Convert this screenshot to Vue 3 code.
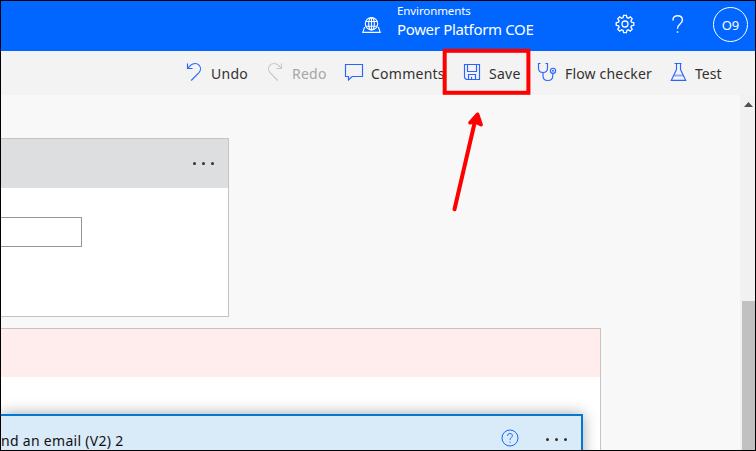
<script setup>
const actions = [
  { id: 'undo', label: 'Undo' },
  { id: 'redo', label: 'Redo' },
  { id: 'comments', label: 'Comments' },
  { id: 'save', label: 'Save' },
  { id: 'checker', label: 'Flow checker' },
  { id: 'test', label: 'Test' },
]
</script>

<template>
  <div class="window">
    <header class="topbar">
      <svg class="globe" width="20" height="20" viewBox="0 0 20 20">
        <circle cx="10.5" cy="7.8" r="6.2" />
        <ellipse cx="10.5" cy="7.8" rx="2.8" ry="6.2" />
        <path d="M4.8 5.5h11.4M4.8 10.2h11.4M10.5 2v12M4.2 11.5H3.4L1.8 16.4h17.4l-1.6-4.9h-.8" />
      </svg>
      <div class="environment">
        <span class="env-caption">Environments</span>
        <span class="env-name">Power Platform COE</span>
      </div>
      <svg class="gear" width="20" height="20" viewBox="0 0 20 20">
        <path d="M8.6 1.3h2.8l.5 2.3 1.4.6 2-1.3 1.9 1.9-1.3 2 .6 1.4 2.3.5v2.6l-2.3.5-.6 1.4 1.3 2-1.9 1.9-2-1.3-1.4.6-.5 2.3H8.6l-.5-2.3-1.4-.6-2 1.3-1.9-1.9 1.3-2-.6-1.4-2.3-.5V8.7l2.3-.5.6-1.4-1.3-2 1.9-1.9 2 1.3 1.4-.6z" />
        <circle cx="10" cy="10" r="3" />
      </svg>
      <svg class="help" width="14" height="20" viewBox="0 0 14 20">
        <path d="M2 6.5V5.9C2 3.3 4 1.7 6.6 1.7c2.9 0 4.8 1.6 4.8 4.2 0 4.4-4.9 4-4.9 8.8" />
        <path d="M5.7 18h1.6" />
      </svg>
      <div class="avatar">O9</div>
    </header>

    <nav class="toolbar">
      <div v-for="a in actions" :key="a.id" class="action" :class="a.id">
        <svg class="icon" width="20" height="20" viewBox="0 0 20 20">
          <path v-if="a.id === 'undo'" d="M2.5 1.5v5h5M2.8 6.2L5.8 3.2C8.3.9 12 1 14 3.1s1.9 5.3 0 7.5L6.2 18.5" />
          <path v-else-if="a.id === 'redo'" d="M15.5 1.5v5h-5M15.2 6.2L12.2 3.2C9.7.9 6 1 4 3.1s-1.9 5.3 0 7.5l7.8 7.9" />
          <path v-else-if="a.id === 'comments'" d="M1.5 2.5h17v12H8.2L4.5 18v-3.5h-3z" />
          <g v-else-if="a.id === 'save'">
            <path d="M1.5 2.5h15v15H3.3l-1.8-1.8zM4.5 2.5v7h9v-7M5.5 17.5v-5h7v5M8.5 17.5v-2.7" />
          </g>
          <g v-else-if="a.id === 'checker'">
            <path d="M3.5 1.5h-2v4.8c0 2.6 1.9 4.2 4.5 4.2s4.5-1.6 4.5-4.2V1.5h-2M6 10.5v3.2c0 3 1.8 4.8 4.7 4.8s5.1-1.8 5.1-4.8v-2.5" />
            <circle cx="16" cy="8.8" r="2.6" />
            <circle cx="16" cy="8.8" r=".4" />
          </g>
          <g v-else>
            <path class="level" d="M5 13.5h9" />
            <path d="M5.5 1.5h7M7.5 1.5v6L2.3 18.3h14.4L11.5 7.5v-6" />
          </g>
        </svg>
        <span class="label">{{ a.label }}</span>
      </div>
    </nav>

    <main class="workspace">
      <div class="canvas">
        <section class="card trigger">
          <div class="card-head">
            <span class="dots"><i /><i /><i /></span>
          </div>
          <div class="card-body"><div class="field" /></div>
        </section>
        <section class="card scope">
          <div class="scope-head" />
          <div class="scope-body">
            <div class="mail">
              <span class="mail-title">nd an email (V2) 2</span>
              <svg class="info" width="18" height="18" viewBox="0 0 18 18">
                <circle cx="9" cy="9" r="8" />
                <path d="M6.6 7V6.7c0-1.3 1-2.2 2.4-2.2s2.4.9 2.4 2.1c0 2-2.4 1.9-2.4 4.3M9 12.7v1.1" />
              </svg>
              <span class="dots"><i /><i /><i /></span>
            </div>
          </div>
        </section>
      </div>
      <aside class="scrollbar">
        <svg class="up" width="9" height="5" viewBox="0 0 9 5"><path d="M0 5L4.5 0 9 5z" /></svg>
        <div class="thumb" />
      </aside>
    </main>

    <svg class="markup" width="756" height="451" viewBox="0 0 756 451">
      <rect x="444.7" y="50.8" width="83.7" height="42" />
      <path d="M454.5 209.3L475.5 119" />
      <path class="tip" d="M477.6 114.3L470 122.8l5.5-1 5.6 2.9z" />
    </svg>
  </div>
</template>

<style>
body {
  margin: 0;
}
</style>

<style scoped>
.window {
  position: relative;
  box-sizing: border-box;
  width: 756px;
  height: 451px;
  border: 1px solid #000;
  overflow: hidden;
  display: flex;
  flex-direction: column;
  background: #f8f8f8;
  font-family: "Noto Sans", "Open Sans", sans-serif;
  color: #323130;
}
svg {
  display: block;
  flex: none;
  fill: none;
}
.topbar {
  flex: none;
  height: 50px;
  display: flex;
  background: #0066ff;
  color: #fff;
}
.topbar svg {
  stroke: #fff;
  stroke-width: 1.1;
}
.globe {
  margin: 15px 0 0 360px;
}
.environment {
  margin-left: 16px;
  width: 218px;
  display: flex;
  flex-direction: column;
  white-space: nowrap;
}
.env-caption {
  font-size: 11.5px;
  line-height: 16px;
  margin-top: 2px;
  letter-spacing: -0.1px;
}
.env-name {
  font-size: 15px;
  line-height: 20px;
  letter-spacing: -0.34px;
}
.topbar .gear {
  margin-top: 13px;
  stroke-width: 1.3;
}
.topbar .help {
  margin: 13px 0 0 36px;
  stroke-width: 1.4;
}
.avatar {
  box-sizing: border-box;
  width: 35px;
  height: 35px;
  margin: 6px 0 0 28px;
  border: 1px solid #fff;
  border-radius: 50%;
  text-align: center;
  font-size: 13px;
  line-height: 34px;
}
.toolbar {
  flex: none;
  height: 44px;
  display: flex;
  padding-left: 184px;
  background: #f3f3f3;
}
.action {
  flex: none;
  display: flex;
  width: 81px;
  white-space: nowrap;
}
.icon {
  margin-top: 11px;
  stroke: #2b64ff;
  stroke-width: 1.15;
}
.label {
  margin: 13px 0 0 6px;
  font-size: 14px;
  line-height: 20px;
  letter-spacing: 0.25px;
}
.redo {
  width: 78px;
  color: #a6a6a6;
}
.redo .icon {
  stroke: #c8c8c8;
}
.comments {
  width: 119px;
}
.comments .label {
  margin-left: 7px;
}
.save {
  width: 74px;
}
.checker {
  width: 132px;
}
.checker .label {
  margin-left: 8px;
  letter-spacing: 0.18px;
}
.test .label {
  letter-spacing: 0;
}
.level {
  stroke: #8badff;
  stroke-width: 2;
}
.workspace {
  flex: 1;
  min-height: 0;
  display: flex;
}
.canvas {
  width: 739px;
  padding-top: 43px;
  box-sizing: border-box;
  overflow: hidden;
}
.card {
  box-sizing: border-box;
  border: 1px solid #c6c4c3;
  border-left: 0;
  background: #fff;
}
.trigger {
  width: 228px;
  height: 179px;
}
.card-head {
  height: 49px;
  display: flex;
  align-items: center;
  justify-content: flex-end;
  background: #dddee0;
}
.dots {
  display: flex;
  gap: 6px;
}
.dots i {
  width: 3px;
  height: 3px;
  border-radius: 1.5px;
  background: #323130;
}
.card-head .dots {
  margin-right: 14px;
}
.card-body {
  padding-top: 29px;
}
.field {
  box-sizing: border-box;
  width: 81px;
  height: 30px;
  border: 1px solid #979593;
  border-left: 0;
}
.scope {
  width: 600px;
  height: 180px;
  margin-top: 11px;
}
.scope-head {
  height: 48px;
  background: #ffecec;
}
.scope-body {
  padding-top: 37px;
}
.mail {
  box-sizing: border-box;
  width: 582px;
  height: 80px;
  display: flex;
  border: 2px solid #0078d4;
  border-left: 0;
  background: #d9eaf8;
  box-shadow: 0 0 14px rgba(0, 0, 0, 0.35);
  color: #111;
}
.mail-title {
  width: 500px;
  margin-top: 15px;
  font-size: 14px;
  line-height: 20px;
  letter-spacing: 0.3px;
  white-space: nowrap;
}
.info {
  margin-top: 13px;
  stroke: #1768ff;
}
.mail .dots {
  margin: 22px 0 0 27px;
}
.scrollbar {
  width: 15px;
  display: flex;
  flex-direction: column;
  background: #f1f1f1;
}
.up {
  margin: 7px 0 0 4px;
  fill: #505050;
}
.thumb {
  flex: 1;
  margin: 194px 0 0 2px;
  background: #c1c1c1;
}
.markup {
  position: absolute;
  left: -1px;
  top: -1px;
  stroke: #f00;
  stroke-width: 4;
  stroke-linecap: round;
  stroke-linejoin: round;
}
.markup rect {
  stroke-linejoin: miter;
}
.tip {
  fill: #f00;
  stroke-width: 3.6;
}
</style>
